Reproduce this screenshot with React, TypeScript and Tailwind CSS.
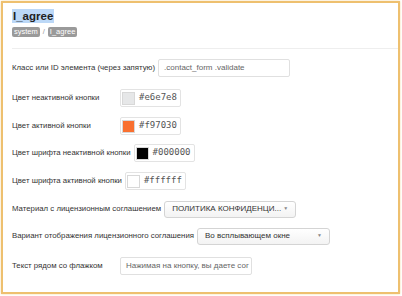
import { useState } from "react";

function ColorField({ color, value }: { color: string; value: string }) {
  return (
    <div className="flex h-[18px] w-[61px] items-center gap-[4px] rounded-[2px] border border-[#e3e3e3] bg-white pl-[1px]">
      <span
        className="h-[13px] w-[13px] border border-[#d8d8d8]"
        style={{ backgroundColor: color }}
      />
      <span className="font-['DejaVu_Sans_Mono',monospace] text-[9px] text-[#555]">
        {value}
      </span>
    </div>
  );
}

function Select({ value, width }: { value: string; width: string }) {
  return (
    <div
      className={`flex h-[17px] items-center justify-between rounded-[3px] border border-[#d4d4d4] bg-gradient-to-b from-white to-[#f3f3f3] pr-[7px] pl-[7px] text-[8px] whitespace-nowrap text-[#333] ${width}`}
    >
      <span>{value}</span>
      <span className="text-[5px] text-[#888]">▼</span>
    </div>
  );
}

export default function App() {
  const [selector] = useState(".contact_form .validate");

  return (
    <div className="h-[296px] w-[402px] bg-white p-[1px] font-['Liberation_Sans',Arial,sans-serif]">
      <div className="h-[293px] w-[399px] border-2 border-[#eec06f] shadow-[0_0_2px_#f5d9a5]">
        <div className="px-[9px] pt-[6px]">
          <h1 className="w-fit bg-[#bcd8f7] px-[1px] text-[11.5px] leading-[14px] font-bold text-[#222]">
            I_agree
          </h1>
          <div className="mt-[4px] flex items-center gap-[3px] text-[7.5px] leading-[10px]">
            <span className="rounded-[2px] bg-[#9a9a9a] px-[2px] text-white">system</span>
            <span className="text-[#999]">/</span>
            <span className="rounded-[2px] bg-[#9a9a9a] px-[2px] text-white">I_agree</span>
          </div>
        </div>
        <div className="mt-[11px] ml-[9px] border-t border-[#eeeeee]" />

        <div className="flex flex-col px-[9px] pt-[10px] text-[7.8px] text-[#333]">
          <div className="flex h-[18px] items-center">
            <label className="mr-[3px] min-w-[104px]">Класс или ID элемента (через запятую)</label>
            <div className="flex h-[18px] w-[132px] items-center rounded-[2px] border border-[#e0e0e0] px-[5px] text-[8px] text-[#666]">
              {selector}
            </div>
          </div>
          <div className="mt-[12px] flex h-[18px] items-center">
            <label className="mr-[4px] min-w-[104px]">Цвет неактивной кнопки</label>
            <ColorField color="#e6e7e8" value="#e6e7e8" />
          </div>
          <div className="mt-[10px] flex h-[18px] items-center">
            <label className="mr-[4px] min-w-[104px]">Цвет активной кнопки</label>
            <ColorField color="#f97030" value="#f97030" />
          </div>
          <div className="mt-[9px] flex h-[18px] items-center">
            <label className="mr-[3px] min-w-[104px]">Цвет шрифта неактивной кнопки</label>
            <ColorField color="#000000" value="#000000" />
          </div>
          <div className="mt-[10px] flex h-[18px] items-center">
            <label className="mr-[3px] min-w-[104px]">Цвет шрифта активной кнопки</label>
            <ColorField color="#ffffff" value="#ffffff" />
          </div>
          <div className="mt-[10px] flex h-[18px] items-center">
            <label className="mr-[3px] min-w-[104px]">Материал с лицензионным соглашением</label>
            <Select value="ПОЛИТИКА КОНФИДЕНЦИ..." width="w-[132px]" />
          </div>
          <div className="mt-[9px] flex h-[18px] items-center">
            <label className="mr-[3px] min-w-[104px]">Вариант отображения лицензионного соглашения</label>
            <Select value="Во всплывающем окне" width="w-[133px]" />
          </div>
          <div className="mt-[12px] flex h-[18px] items-center">
            <label className="mr-[4px] min-w-[104px]">Текст рядом со флажком</label>
            <div className="flex h-[18px] w-[132px] items-center overflow-hidden rounded-[2px] border border-[#e0e0e0] px-[5px] text-[8px] whitespace-nowrap text-[#666]">
              Нажимая на кнопку, вы даете сог
            </div>
          </div>
        </div>
      </div>
    </div>
  );
}
